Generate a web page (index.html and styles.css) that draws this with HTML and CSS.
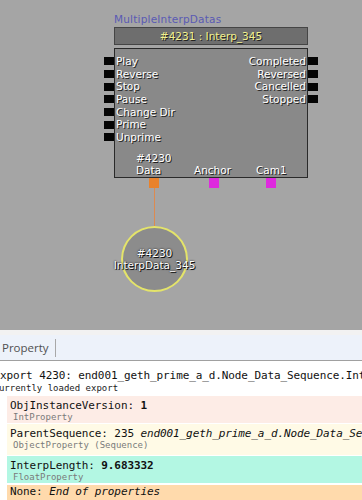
FILE: index.html
```html
<!DOCTYPE html>
<html>
<head>
<meta charset="utf-8">
<link rel="stylesheet" href="styles.css">
</head>
<body>
<div class="app">
  <div class="canvas">
    <div class="seq-title">MultipleInterpDatas</div>
    <div class="node-header">#4231 : Interp_345</div>
    <div class="node-body">
      <ul class="links inputs">
        <li><span class="sock"></span>Play</li>
        <li><span class="sock"></span>Reverse</li>
        <li><span class="sock"></span>Stop</li>
        <li><span class="sock"></span>Pause</li>
        <li><span class="sock"></span>Change Dir</li>
        <li><span class="sock"></span>Prime</li>
        <li><span class="sock"></span>Unprime</li>
      </ul>
      <ul class="links outputs">
        <li>Completed<span class="sock"></span></li>
        <li>Reversed<span class="sock"></span></li>
        <li>Cancelled<span class="sock"></span></li>
        <li>Stopped<span class="sock"></span></li>
      </ul>
      <div class="var var-data"><span>#4230</span><span>Data</span></div>
      <div class="var var-anchor"><span>Anchor</span></div>
      <div class="var var-cam"><span>Cam1</span></div>
      <span class="vsock vsock-data"></span>
      <span class="vsock vsock-anchor"></span>
      <span class="vsock vsock-cam"></span>
    </div>
    <div class="wire"></div>
    <div class="var-node"><span>#4230</span><span>InterpData_345</span></div>
  </div>
  <div class="sep"></div>
  <div class="toolbar"><span class="tab">Property</span></div>
  <div class="tree">
    <div class="exp-line">export 4230: end001_geth_prime_a_d.Node_Data_Sequence.InterpData_345</div>
    <div class="exp-sub">currently loaded export</div>
    <div class="prop-row row-int">
      <div class="prop-title">ObjInstanceVersion: <b>1</b></div>
      <div class="prop-type">IntProperty</div>
    </div>
    <div class="prop-row row-obj">
      <div class="prop-title">ParentSequence: 235 <i>end001_geth_prime_a_d.Node_Data_Sequence</i></div>
      <div class="prop-type">ObjectProperty (Sequence)</div>
    </div>
    <div class="prop-row row-float">
      <div class="prop-title">InterpLength: <b>9.683332</b></div>
      <div class="prop-type">FloatProperty</div>
    </div>
    <div class="prop-row row-none">
      <div class="prop-title">None: <i>End of properties</i></div>
    </div>
  </div>
</div>
</body>
</html>
```

FILE: styles.css
```css
* { box-sizing: border-box; margin: 0; padding: 0; }
html, body { width: 362px; height: 500px; overflow: hidden; }
body { background: #ffffff; font-family: "DejaVu Sans", sans-serif; }

.canvas {
  position: relative;
  height: 330px;
  background: #a5a5a5;
  overflow: hidden;
}

.seq-title {
  position: absolute;
  left: 114px;
  top: 13px;
  font-size: 10.5px;
  line-height: 12px;
  color: #5a5ab4;
  letter-spacing: 0.2px;
  white-space: nowrap;
}

.node-header {
  position: absolute;
  left: 114px;
  top: 27px;
  width: 194px;
  height: 18px;
  background: #6e6e6e;
  border: 1px solid #454545;
  color: #f2f290;
  font-size: 10.5px;
  line-height: 16px;
  text-align: center;
  text-shadow: 1px 1px 0 #222;
  white-space: nowrap;
}

.node-body {
  position: absolute;
  left: 114px;
  top: 48px;
  width: 194px;
  height: 130px;
  background: #898989;
  border: 1px solid #2a2a2a;
  padding-top: 6px;
  display: flex;
  justify-content: space-between;
  align-items: flex-start;
  color: #ffffff;
  font-size: 10.5px;
  text-shadow: 1px 1px 0 #222;
  white-space: nowrap;
}

.links { list-style: none; }
.links li {
  display: flex;
  align-items: center;
  height: 12.67px;
  line-height: 12.67px;
}
.links .sock {
  display: block;
  width: 10px;
  height: 8px;
  background: #050505;
  flex: none;
}
.inputs .sock { margin-left: -11px; margin-right: 2px; }
.outputs li { justify-content: flex-end; }
.outputs .sock { margin-right: -11px; margin-left: 2px; }

.var {
  position: absolute;
  bottom: 1px;
  display: flex;
  flex-direction: column;
  line-height: 12px;
}
.var-data { left: 21px; }
.var-anchor { left: 79px; }
.var-cam { left: 141px; }

.vsock {
  position: absolute;
  top: calc(100% + 1px);
  width: 10px;
  height: 10px;
}
.vsock-data { left: 34px; background: #e8822c; }
.vsock-anchor { left: 94px; background: #de2ade; }
.vsock-cam { left: 151px; background: #de2ade; }

.wire {
  position: absolute;
  left: 154px;
  top: 188px;
  width: 1px;
  height: 39px;
  background: #dc8a50;
}

.var-node {
  position: absolute;
  left: 121px;
  top: 226px;
  width: 67px;
  height: 66px;
  border-radius: 50%;
  border: 2px solid #e4e46a;
  background: #8c8c8c;
  display: flex;
  flex-direction: column;
  align-items: center;
  justify-content: center;
  color: #ffffff;
  font-size: 10.5px;
  line-height: 12px;
  white-space: nowrap;
  text-shadow: 1px 1px 0 #111, 0 0 2px #000;
}

.sep { height: 5px; background: #f2f2f2; }

.toolbar {
  height: 26px;
  background: #edf2fa;
  border-bottom: 1px solid #a0a0a0;
  display: flex;
  align-items: center;
  padding-left: 2px;
}
.tab {
  font-family: "Open Sans", sans-serif;
  font-size: 11.5px;
  line-height: 18px;
  color: #505050;
  padding-right: 6px;
  border-right: 1px solid #a8a8a8;
}

.tree {
  padding-top: 8px;
  margin-left: -6.5px;
  font-family: "DejaVu Sans Mono", monospace;
  color: #111;
  white-space: nowrap;
  overflow: hidden;
}
.exp-line { font-size: 11px; line-height: 14px; letter-spacing: -0.1px; }
.exp-sub { font-size: 9px; line-height: 11px; color: #222; }

.prop-row {
  margin-left: 13.5px;
  padding: 3px 0 0 3px;
  height: 27px;
  overflow: hidden;
}
.prop-title { font-size: 11px; line-height: 13px; letter-spacing: -0.1px; }
.prop-type { font-size: 9px; line-height: 11px; color: #7a7a7a; padding-left: 3px; }

.row-int { margin-top: 2px; background: #fdece6; }
.row-obj { margin-top: 1px; height: 31px; background: #fffae6; }
.row-float { margin-top: 1px; background: #b3f7e3; }
.row-none { margin-top: 2px; padding-top: 0; background: #ffdaac; }
```
